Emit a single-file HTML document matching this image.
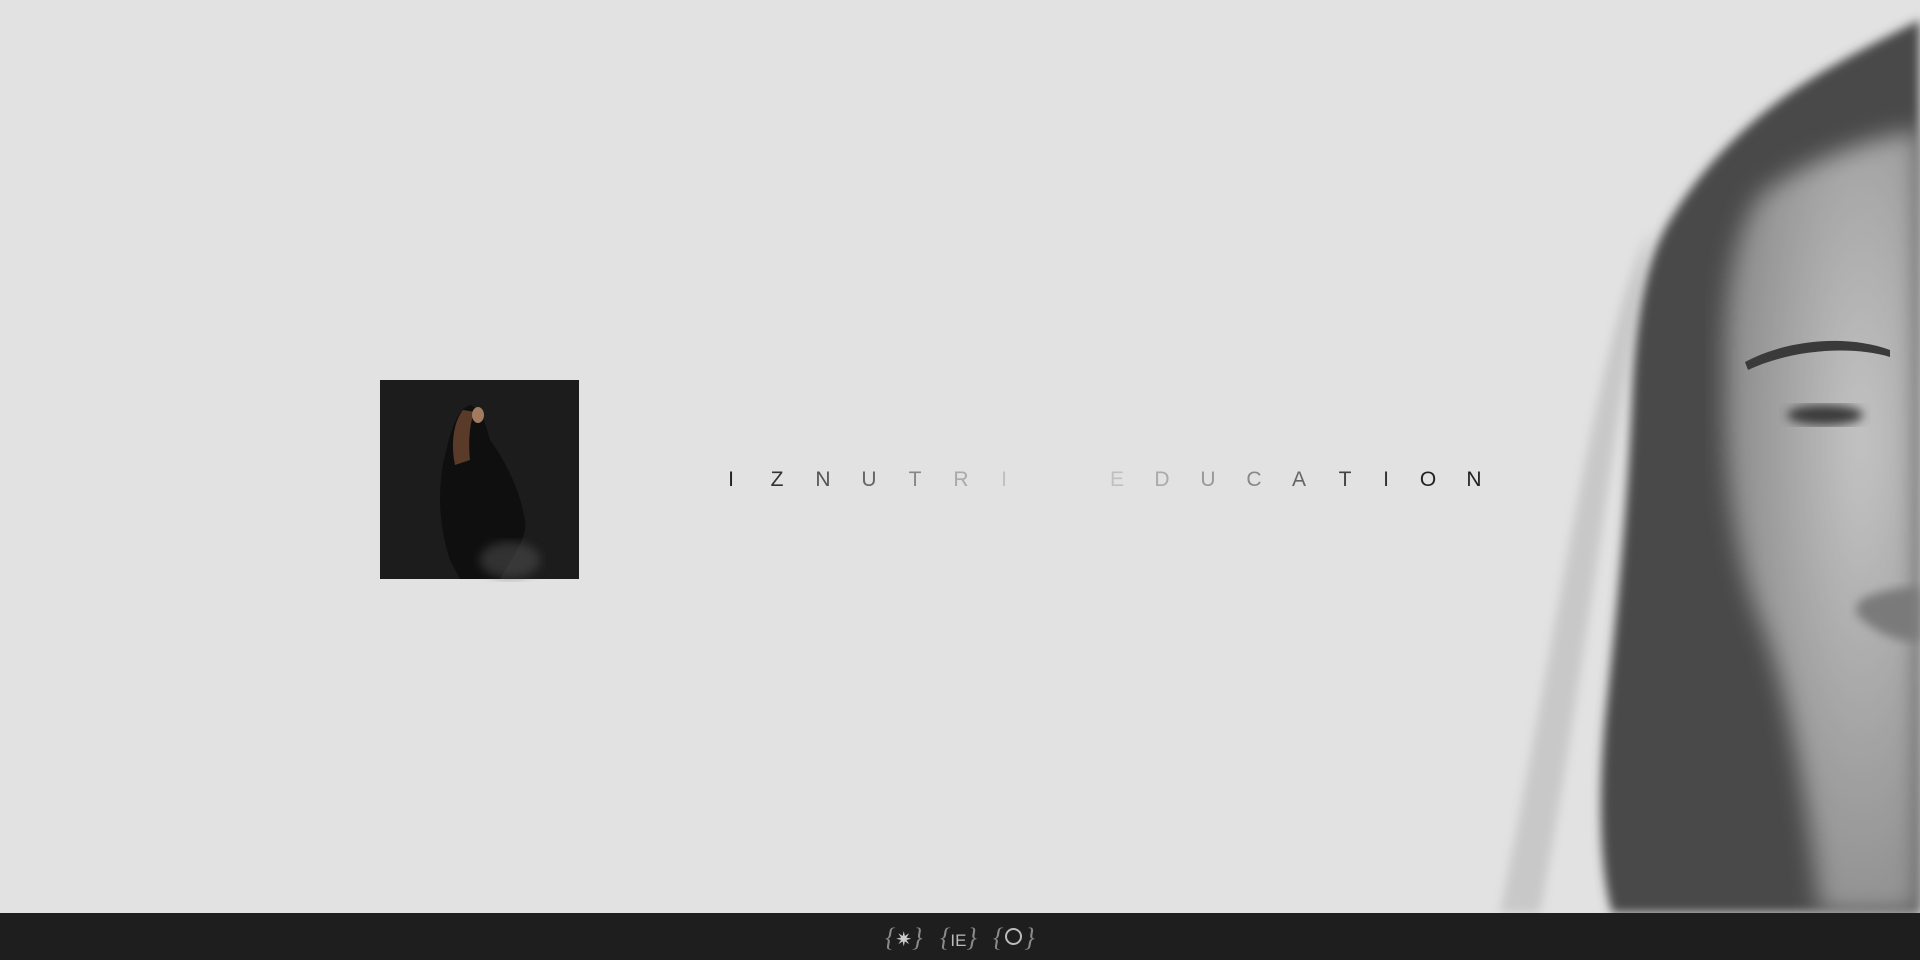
<!DOCTYPE html>
<html><head><meta charset="utf-8"><style>
html,body{margin:0;padding:0;width:1920px;height:960px;overflow:hidden;background:#e2e2e2;font-family:"Liberation Sans",sans-serif}
#t{position:absolute;left:0;top:465px;height:30px;font-size:21px;line-height:30px}
#t span{position:absolute;width:30px;text-align:center;top:0}
#foot{position:absolute;left:0;top:913px;width:1920px;height:47px;background:#1e1e1e}
.br{position:absolute;top:10px;color:#8a8a8a;font-size:26px;font-style:italic;font-family:'Liberation Serif',serif}
</style></head><body>
<svg width="1920" height="913" style="position:absolute;left:0;top:0">
<defs><filter id="b"><feGaussianBlur stdDeviation="5"/></filter><filter id="b2"><feGaussianBlur stdDeviation="12"/></filter>
<radialGradient id="sk" cx="0.7" cy="0.4" r="0.7"><stop offset="0" stop-color="#c4c4c4"/><stop offset="1" stop-color="#8a8a8a"/></radialGradient></defs>
<path d="M1920,20 C1880,40 1820,70 1780,100 C1740,130 1700,170 1670,220 C1645,260 1635,320 1632,400 C1628,500 1618,600 1605,720 C1598,800 1600,870 1612,913 L1920,913 Z" fill="#4a4a4a" filter="url(#b)"/>
<path d="M1650,230 C1600,320 1560,620 1500,913 L1540,913 C1580,700 1615,420 1650,230Z" fill="#999" opacity="0.35" filter="url(#b)"/>
<path d="M1920,130 C1860,140 1800,165 1760,195 C1735,230 1722,290 1725,380 C1722,470 1735,560 1760,620 C1785,680 1805,780 1820,913 L1920,913 Z" fill="url(#sk)" filter="url(#b2)"/>
<path d="M1745,362 C1790,338 1850,335 1890,350 L1890,357 C1850,345 1790,350 1748,370Z" fill="#3a3a3a"/>
<ellipse cx="1825" cy="415" rx="38" ry="10" fill="#3a3a3a" filter="url(#b)"/>
<path d="M1860,600 C1880,590 1910,585 1920,588 L1920,640 C1900,645 1870,630 1855,612Z" fill="#7a7a7a" filter="url(#b)"/>
<rect x="380" y="380" width="199" height="199" fill="#1c1c1c"/>
<path d="M470,405 C455,410 448,440 442,470 C438,500 440,530 450,560 L460,579 L500,579 C510,560 528,540 525,520 C520,490 505,460 490,440 C485,420 480,408 470,405Z" fill="#0f0f0f"/>
<path d="M463,410 C455,420 450,440 455,465 L470,460 C468,440 470,420 475,412Z" fill="#5a3a28"/>
<ellipse cx="478" cy="415" rx="6" ry="8" fill="#a27a60"/>
<ellipse cx="510" cy="560" rx="30" ry="18" fill="#555" opacity="0.5" filter="url(#b)"/>
</svg>
<div id="t">
<span style="left:716px;color:#222">I</span><span style="left:762px;color:#333">Z</span><span style="left:808px;color:#555">N</span><span style="left:854px;color:#666">U</span><span style="left:900px;color:#888">T</span><span style="left:946px;color:#aaa">R</span><span style="left:989px;color:#c0c0c0">I</span>
<span style="left:1102px;color:#c0c0c0">E</span><span style="left:1147px;color:#aaa">D</span><span style="left:1193px;color:#999">U</span><span style="left:1239px;color:#888">C</span><span style="left:1284px;color:#666">A</span><span style="left:1330px;color:#444">T</span><span style="left:1371px;color:#333">I</span><span style="left:1413px;color:#222">O</span><span style="left:1459px;color:#222">N</span>
</div>
<div id="foot">
<div class="br" style="left:885px">{<span style="font-style:normal;color:#ccc;font-size:20px;font-family:'DejaVu Sans'">✷</span>}</div>
<div class="br" style="left:940px">{<span style="font-style:normal;color:#bbb;font-size:17px;font-family:'Liberation Sans'">IE</span>}</div>
<div class="br" style="left:993px">{<span style="display:inline-block;width:13px;height:13px;border:2px solid #bbb;border-radius:50%;vertical-align:1px;margin:0 2px"></span>}</div>
</div>
</body></html>
